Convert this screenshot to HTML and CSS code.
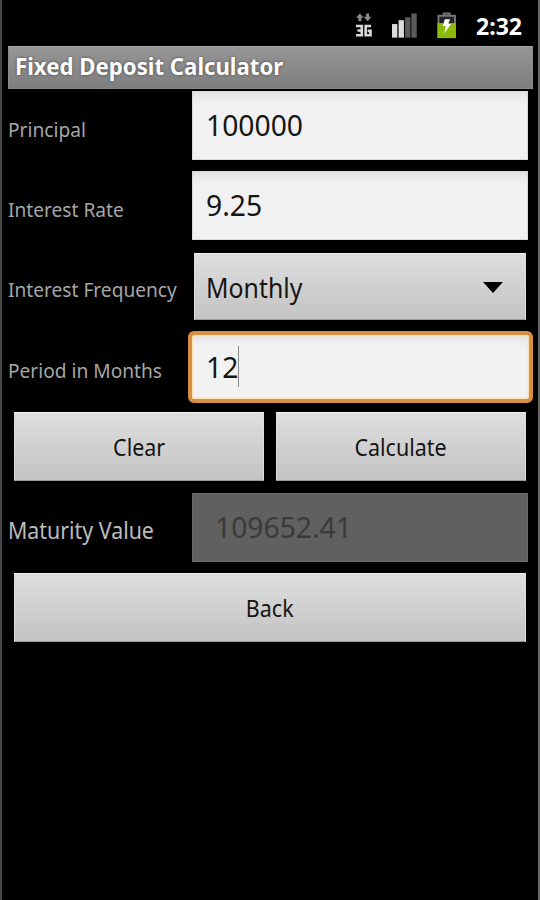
FILE: index.html
```
<!DOCTYPE html>
<html lang="en">
<head>
  <meta charset="UTF-8" />
  <meta name="viewport" content="width=device-width, initial-scale=1.0" />
  <title>Fixed Deposit Calculator</title>
  <link rel="stylesheet" href="styles.css">
</head>
<body>
<div class="screen">
  <div class="status-bar">
    <svg class="icon-3g" width="18" height="28" viewBox="0 0 18 28">
      <path d="M5 1L1 5.500H3.500V9H6.500V5.500H9ZM13 9L9 4.500H11.500V1H14.500V4.500H17Z" fill="#8c8c8c"/>
      <path d="M1 14H7V23.500H1M2.500 18.700H7M16.500 14H11V23.500H16V19H13" fill="none" stroke="#d8d8d8" stroke-width="2.700"/>
    </svg>
    <svg class="icon-signal" width="26" height="26" viewBox="0 0 26 26">
      <rect x="0" y="11" width="5.500" height="14" fill="#dcdcdc"/>
      <rect x="6.800" y="7" width="5.500" height="18" fill="#dcdcdc"/>
      <rect x="13.500" y="4" width="5.500" height="21" fill="#5a5a5a"/>
      <rect x="20" y="0" width="5.500" height="25" fill="#5a5a5a"/>
    </svg>
    <svg class="icon-battery" width="20" height="27" viewBox="0 0 20 27">
      <path d="M7 3V1H13V3M1.500 26V3.500H18.500V26" fill="#222" stroke="#777" stroke-width="2"/>
      <rect x="0.500" y="11" width="19" height="15.500" fill="#8dbb0c"/>
      <path d="M8 7H13.500L11.500 12H14.500L7.500 21.500L9 14H6Z" fill="#fff"/>
    </svg>
    <span class="clock">2:32</span>
  </div>

  <h1 class="title"><span>Fixed Deposit Calculator</span></h1>

  <form class="calc">
    <div class="row">
      <label>Principal</label>
      <div class="field"><span>100000</span></div>
    </div>
    <div class="row">
      <label>Interest Rate</label>
      <div class="field"><span>9.25</span></div>
    </div>
    <div class="row">
      <label>Interest Frequency</label>
      <div class="field select">
        <span>Monthly</span>
        <svg width="20" height="11" viewBox="0 0 20 11"><path d="M0 0H20L10 11Z" fill="#000"/></svg>
      </div>
    </div>
    <div class="row period">
      <label>Period in Months</label>
      <div class="field focused"><span>12</span><i class="caret"></i></div>
    </div>
    <div class="buttons">
      <button type="button"><span>Clear</span></button>
      <button type="button"><span>Calculate</span></button>
    </div>
    <div class="row result">
      <label>Maturity Value</label>
      <div class="field disabled"><span>109652.41</span></div>
    </div>
    <div class="buttons">
      <button type="button"><span>Back</span></button>
    </div>
  </form>
</div>
</body>
</html>
```
FILE: styles.css
```
* { margin: 0; padding: 0; box-sizing: border-box; }
body {
  font-family: "Noto Sans", "Open Sans", sans-serif;
  background: #000;
}
.screen {
  height: 900px;
  border-left: 2px solid #484848;
  border-right: 2px solid #666;
  background: #000;
  overflow: hidden;
}

/* status bar */
.status-bar {
  display: flex;
  align-items: flex-start;
  height: 46px;
  padding: 12px 14px 0 353px;
}
.icon-3g { margin-right: 20px; }
.icon-signal { margin: 1px 19px 0 0; }
.clock {
  margin-left: 20px;
  font-size: 24px;
  line-height: 27px;
  font-weight: 700;
  color: #fff;
  transform: scaleX(.96);
  transform-origin: left;
}

.title {
  height: 43px;
  margin: 0 5px 0 6px;
  padding-left: 6px;
  border: 1px solid #8a8a8a;
  border-top-color: #a5a5a5;
  background: linear-gradient(#969696, #7e7e7e);
  color: #fff;
  font-size: 23px;
  line-height: 39px;
  text-shadow: 0 0 3px #444;
}
.title span {
  display: inline-block;
  transform: scaleX(.965);
  transform-origin: left;
}

/* form rows */
.calc { padding: 2px 10px 0 6px; }
.row {
  display: grid;
  grid-template-columns: 184px 1fr;
  height: 80px;
}
.row label {
  font-size: 20px;
  line-height: 78px;
  color: #a6a6a6;
  white-space: nowrap;
  transform: scaleX(.957);
  transform-origin: left;
}
.field {
  display: flex;
  align-items: center;
  height: 69px;
  padding: 0 0 2px 13px;
  background: linear-gradient(#e2e2e2, #f1f1f1 12px);
  border: 1px solid #d8d8d8;
  color: #151515;
  font-size: 29px;
}
.field span {
  transform: scaleX(.975);
  transform-origin: left;
}
.select {
  justify-content: space-between;
  height: 67px;
  margin: 2px 2px 0;
  padding: 2px 22px 0 11px;
  background: linear-gradient(#dedede, #c3c3c3);
  border-color: #f2f2f2 #ddd #999 #ddd;
  font-size: 27px;
}
.select span { transform: scaleX(.92); }
.focused {
  height: 72px;
  margin: 0 -5px 0 -4px;
  padding: 0 0 2px 14px;
  background: linear-gradient(#e4e4e4, #f2f2f2 12px);
  border: 4px solid #d88e44;
  border-radius: 6px;
  box-shadow: inset 0 0 2px 1px #ffdda0;
}
.caret {
  width: 1px;
  height: 41px;
  margin-left: -1px;
  background: #888;
}
.period { height: 81px; }
.period label { line-height: 80px; }

.buttons {
  display: flex;
  gap: 12px;
  height: 81px;
  padding: 0 2px 0 6px;
}
.buttons button {
  flex: 1;
  height: 69px;
  border: 1px solid #ddd;
  border-color: #f2f2f2 #ddd #999 #ddd;
  background: linear-gradient(#dedede, #c3c3c3);
  color: #151515;
  font-family: inherit;
  font-size: 24px;
}
.buttons span {
  display: inline-block;
  transform: scaleX(.895);
}

.result label {
  font-size: 24px;
  line-height: 73px;
  color: #bcbcbc;
  transform: scaleX(.89);
}
.disabled {
  padding-left: 22px;
  background: #606060;
  border-color: #6c6c6c;
  color: #3a3a3a;
}
```
